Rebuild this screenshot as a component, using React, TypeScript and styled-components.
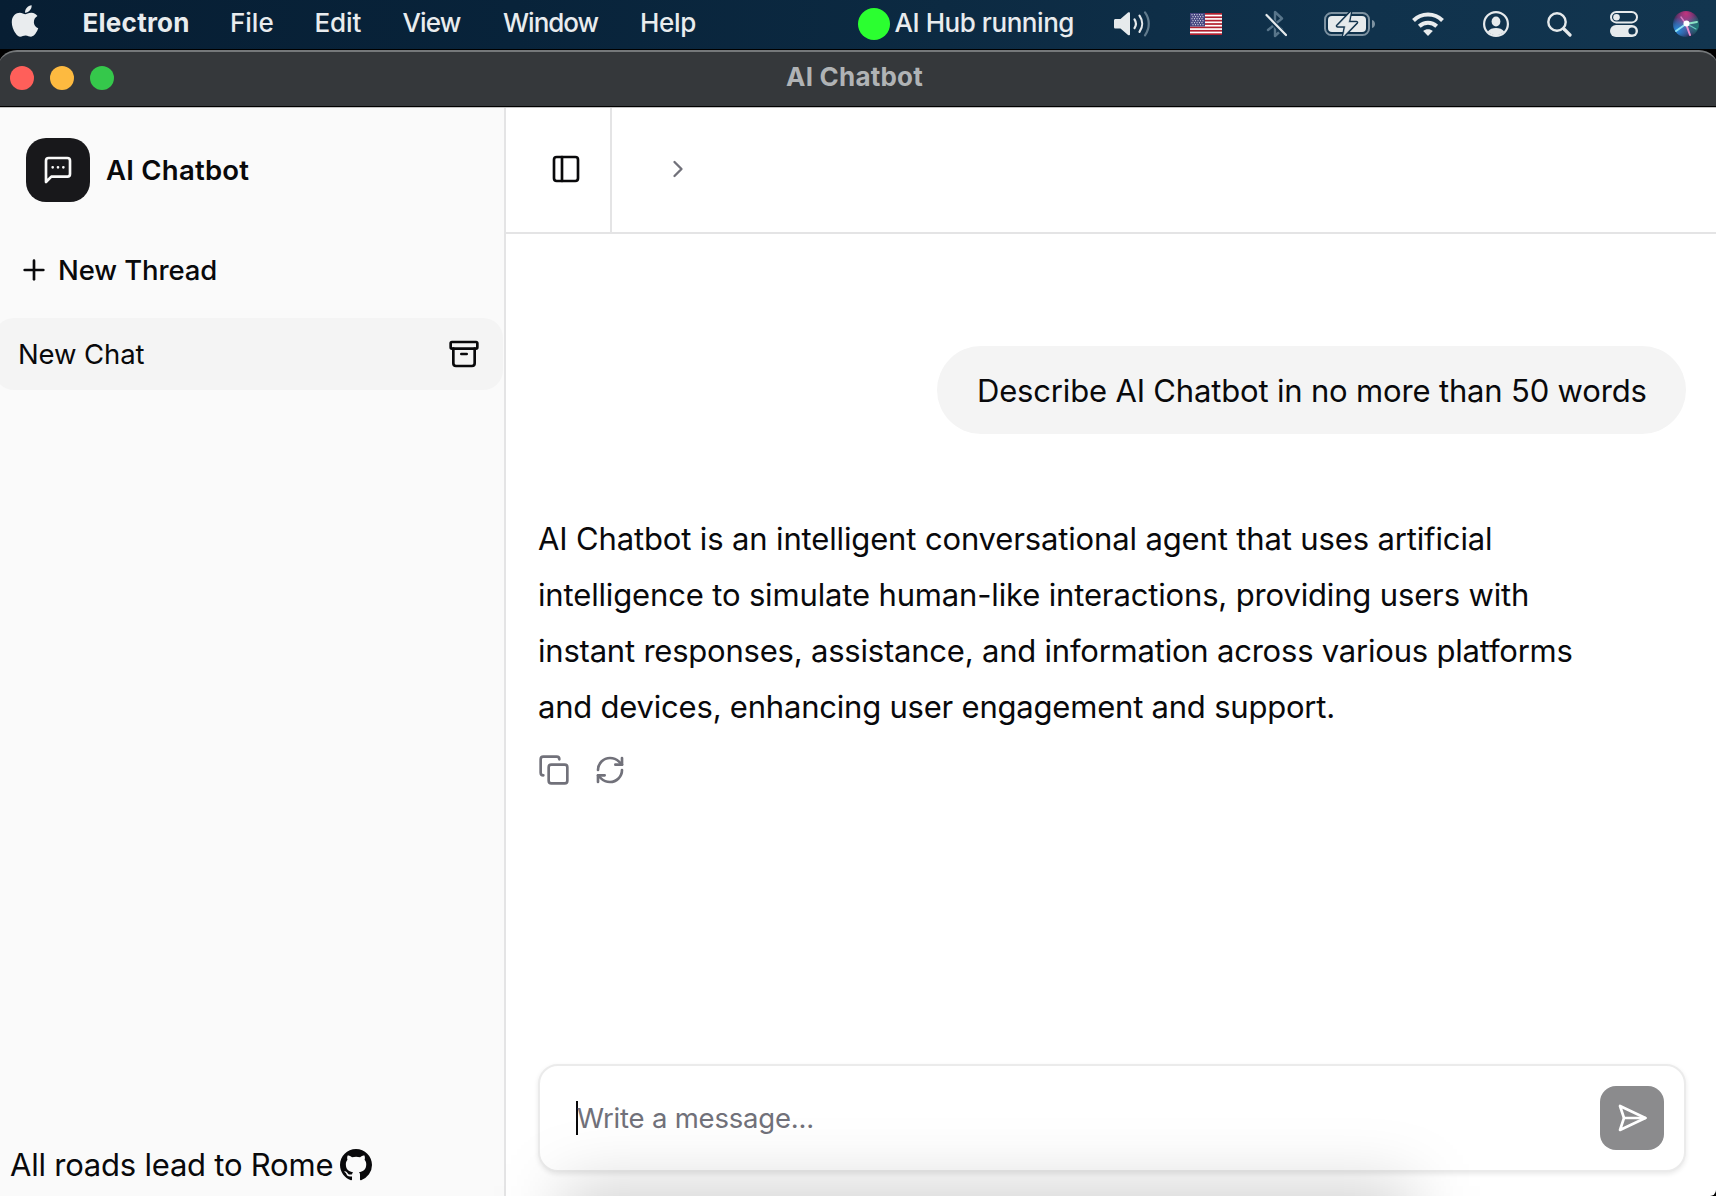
import React from "react";
import styled, { createGlobalStyle } from "styled-components";
import {
  Archive,
  ChevronRight,
  Copy,
  PanelLeft,
  Plus,
  RefreshCw,
} from "lucide-react";
import { FaApple } from "react-icons/fa";

const GlobalStyle = createGlobalStyle`
  *, *::before, *::after { box-sizing: border-box; }
  body {
    margin: 0;
    background: #000;
    font-family: Inter, "Liberation Sans", sans-serif;
    color: #09090b;
  }
  svg { display: block; flex: none; }
`;

const Screen = styled.div`
  position: relative;
  display: flex;
  flex-direction: column;
  width: 1716px;
  height: 1196px;
  overflow: hidden;
  background: #000;
`;

/* ---------- system menu bar ---------- */

const MenuBar = styled.header`
  display: flex;
  align-items: center;
  flex: none;
  height: 49px;
  margin-bottom: 1px;
  padding-bottom: 1px;
  background: linear-gradient(90deg, #071e33 0%, #08233a 30%, #0c2a42 55%, #10324c 80%, #12354f 100%);
  color: #e9ecee;
  font-size: 26px;
  font-weight: 500;
  line-height: 46px;
  white-space: nowrap;
`;

const AppleSlot = styled.div`
  display: flex;
  width: 82.5px;
  height: 48px;
  padding: 3px 0 0 7px;
`;

const MenuItem = styled.span<{ $width: number; $tracking?: number; $bold?: boolean }>`
  width: ${(p) => p.$width}px;
  padding-bottom: 2px;
  letter-spacing: ${(p) => p.$tracking ?? 0}px;
  font-weight: ${(p) => (p.$bold ? 700 : 500)};
`;

const HubStatus = styled.div`
  display: flex;
  align-items: center;
  gap: 5px;
  margin-left: auto;
  letter-spacing: -0.45px;
`;

const HubDot = styled.span`
  width: 32px;
  height: 32px;
  border-radius: 50%;
  background: #2bff30;
`;

const HubLabel = styled.span`
  padding-bottom: 3px;
`;

const StatusIcons = styled.div`
  display: flex;
  align-items: center;
  height: 48px;
  padding-right: 16px;
`;

const StatusIcon = styled.span<{ $gap: number }>`
  display: flex;
  margin-left: ${(p) => p.$gap}px;
`;

/* ---------- window ---------- */

const Window = styled.div`
  display: flex;
  flex-direction: column;
  flex: 1;
  min-height: 0;
  overflow: hidden;
  border-bottom-right-radius: 6px;
`;

const TitleBar = styled.div`
  display: flex;
  align-items: center;
  flex: none;
  height: 56px;
  margin: 0 -3px;
  padding: 0 13px 2px;
  border-top: 2px solid #75787a;
  border-radius: 20px 20px 0 0;
  background: #35383b;
`;

const Lights = styled.div`
  display: flex;
  flex: 1;
  gap: 16px;
  height: 24px;
`;

const Light = styled.span<{ $color: string }>`
  width: 24px;
  height: 24px;
  border-radius: 50%;
  background: ${(p) => p.$color};
`;

const WindowTitle = styled.div`
  padding-bottom: 3px;
  margin-right: 7px;
  color: #b0b3b5;
  font-size: 26px;
  font-weight: 700;
  line-height: 40px;
  letter-spacing: 0.2px;
`;

const TitleSpacer = styled.div`
  flex: 1;
`;

const Body = styled.div`
  display: flex;
  flex: 1;
  min-height: 0;
  margin-top: 1px;
  border-top: 1px solid #c2c2c2;
  background: #fff;
`;

/* ---------- sidebar ---------- */

const Sidebar = styled.aside`
  display: flex;
  flex-direction: column;
  flex: none;
  width: 506px;
  border-right: 2px solid #e4e4e5;
  background: #fafafa;
`;

const Brand = styled.div`
  display: flex;
  align-items: center;
  gap: 16px;
  padding: 30px 26px 0;
  font-size: 27.5px;
  font-weight: 600;
  letter-spacing: 0.25px;
  line-height: 40px;
`;

const BrandMark = styled.span`
  display: grid;
  place-items: center;
  width: 64px;
  height: 64px;
  border-radius: 20px;
  background: #18181b;
`;

const NewThread = styled.button`
  display: flex;
  align-items: center;
  gap: 8px;
  height: 64px;
  margin: 36px 0 0 18px;
  padding: 0;
  border: 0;
  background: none;
  color: inherit;
  font: 500 27.5px/40px Inter, "Liberation Sans", sans-serif;
  letter-spacing: -0.1px;
`;

const ThreadRow = styled.div`
  display: flex;
  align-items: center;
  justify-content: space-between;
  height: 72px;
  margin: 16px 1px 0 -6px;
  padding: 0 23px 0 24px;
  border-radius: 20px;
  background: #f4f4f4;
  font-size: 27.5px;
  line-height: 40px;
  letter-spacing: -0.1px;
`;

const Footer = styled.div`
  display: flex;
  align-items: center;
  gap: 7px;
  margin-top: auto;
  padding: 0 10px 11px;
  font-size: 31px;
  line-height: 40px;
  letter-spacing: -0.22px;
`;

/* ---------- conversation ---------- */

const Main = styled.main`
  display: flex;
  flex-direction: column;
  flex: 1;
  min-width: 0;
`;

const Header = styled.div`
  display: flex;
  flex: none;
  height: 126px;
  border-bottom: 2px solid #e4e4e5;
`;

const ToggleCell = styled.div`
  display: flex;
  align-items: center;
  width: 106px;
  padding: 0 0 2px 44px;
  border-right: 2px solid #e4e4e5;
`;

const Crumb = styled.div`
  display: flex;
  align-items: center;
  padding: 0 0 2px 52px;
  color: #71717a;
`;

const Conversation = styled.section`
  display: flex;
  flex-direction: column;
  flex: 1;
  padding: 112px 30px 0 32px;
`;

const UserBubble = styled.div`
  align-self: flex-end;
  width: 749px;
  height: 88px;
  padding-left: 40px;
  border-radius: 44px;
  background: #f4f4f4;
  font-size: 31px;
  line-height: 90px;
  letter-spacing: -0.17px;
  white-space: nowrap;
`;

const Answer = styled.p`
  display: flex;
  flex-direction: column;
  margin: 77px 0 0;
  font-size: 31px;
  line-height: 56px;
  white-space: nowrap;
`;

const AnswerLine = styled.span<{ $tracking: number }>`
  letter-spacing: ${(p) => p.$tracking}px;
`;

const Actions = styled.div`
  display: flex;
  gap: 24px;
  margin-top: 19px;
  color: #71717a;
`;

const Composer = styled.div`
  display: flex;
  align-items: center;
  justify-content: space-between;
  flex: none;
  height: 108px;
  margin: 0 30px 24px 32px;
  padding: 0 20px 0 36px;
  border: 2px solid #ebebeb;
  border-radius: 20px;
  background: #fff;
  box-shadow: 0 2px 5px rgba(0, 0, 0, 0.09);
`;

const Placeholder = styled.div`
  display: flex;
  align-items: center;
  height: 34px;
  border-left: 2px solid #09090b;
  color: #71717a;
  font-size: 27.5px;
  line-height: 34px;
  letter-spacing: -0.2px;
  text-indent: -1px;
`;

const SendButton = styled.button`
  display: grid;
  place-items: center;
  width: 64px;
  height: 64px;
  padding: 0;
  border: 0;
  border-radius: 16px;
  background: #8b8b8d;
`;

/* Soft shadow cast by the dock hidden under the lower edge of the screen */
const DockShadow = styled.div`
  position: absolute;
  left: 562px;
  top: 1186px;
  width: 850px;
  height: 200px;
  background: rgba(0, 0, 0, 0.18);
  filter: blur(33px);
  pointer-events: none;
`;

/* ---------- drawings ---------- */

const SpeakerIcon = () => (
  <svg width="37" height="28" viewBox="0 0 37 28" fill="none" strokeLinecap="round">
    <path d="M1.5 9h5L14 2.6c1-.7 2-.4 2 .8v20.8c0 1.2-1 1.5-2 .8L6.5 18.6h-5C.6 18.6 0 18 0 17v-6.4C0 9.6.6 9 1.5 9Z" fill="#e6eaec" />
    <path d="M20.5 9.4c1.7 2.6 1.7 6.2 0 8.8" stroke="#e6eaec" strokeWidth="2.2" />
    <path d="M25.5 5.7c3.5 4.9 3.5 11.3 0 16.2" stroke="#e6eaec" strokeWidth="2.2" />
    <path d="M31 2.3c5 7 5 16 0 23" stroke="#607a8c" strokeWidth="2.2" />
  </svg>
);

const FlagIcon = () => (
  <svg width="32" height="22" viewBox="0 0 32 22">
    <rect width="32" height="22" fill="#fff" />
    {[0, 1, 2, 3, 4, 5, 6].map((i) => (
      <rect key={i} y={i * 3.385} width="32" height="1.7" fill="#b1202f" />
    ))}
    <rect width="15" height="13.5" fill="#454680" />
    {[0, 1, 2, 3, 4, 5].map((r) =>
      [0, 1, 2, 3, 4].map((c) => (
        <circle key={`${r}-${c}`} cx={2 + c * 2.5 + (r % 2)} cy={1.7 + r * 2} r="0.6" fill="#e2e2ee" />
      ))
    )}
  </svg>
);

const BluetoothOffIcon = () => (
  <svg width="22" height="28" viewBox="0 0 22 28" fill="none" strokeLinecap="round" strokeLinejoin="round">
    <path d="M3 20 17 8.5 10 2v24l7-6.5L3 8" stroke="#58758a" strokeWidth="2.4" />
    <path d="M1.5 5.500 21 26" stroke="#12344e" strokeWidth="5" />
    <path d="M1.5 5 21 25" stroke="#e6eaec" strokeWidth="2.2" />
  </svg>
);

const BatteryIcon = () => (
  <svg width="52" height="26" viewBox="0 0 52 26">
    <rect x="1" y="2" width="44" height="22" rx="6.5" fill="none" stroke="#7d92a1" strokeWidth="2" />
    <path d="M48 9c4 1 4 7 0 8Z" fill="#7d92a1" />
    <rect x="4" y="5" width="38" height="16" rx="4" fill="#e6eaec" />
    <path d="M26.500 1.500 13.500 15h8L19.500 25 32.500 11.500h-8Z" fill="#e6eaec" stroke="#11334d" strokeWidth="3.4" strokeLinejoin="round" />
    <path d="M26.500 1.500 13.500 15h8L19.500 25 32.500 11.500h-8Z" fill="#e6eaec" stroke="#e6eaec" strokeWidth="0.6" strokeLinejoin="round" />
  </svg>
);

const WifiIcon = () => (
  <svg width="32" height="24" viewBox="0 0 32 24" fill="none" stroke="#e9ecee" strokeWidth="4">
    <path d="M1.5 8.5c8-8 21-8 29 0" />
    <path d="M7.3 14.3c5-4.7 12.4-4.7 17.4 0" />
    <path d="M11.2 19c2.7-2.5 6.9-2.5 9.6 0L16 24Z" fill="#e9ecee" stroke="none" />
  </svg>
);

const UserIcon = () => (
  <svg width="26" height="26" viewBox="0 0 26 26">
    <circle cx="13" cy="13" r="11.9" fill="none" stroke="#e6eaec" strokeWidth="2.2" />
    <ellipse cx="13" cy="10.5" rx="4.4" ry="5" fill="#e6eaec" />
    <path d="M4.8 20.5c3.5-4.6 12.9-4.6 16.4 0-4 5-12.4 5-16.4 0Z" fill="#e6eaec" />
  </svg>
);

const SearchIcon = () => (
  <svg width="25" height="25" viewBox="0 0 25 25" fill="none" stroke="#e6eaec" strokeLinecap="round">
    <circle cx="10" cy="10" r="8.7" strokeWidth="2.4" />
    <path d="m17 17 6 6" strokeWidth="3.2" />
  </svg>
);

const ControlCenterIcon = () => (
  <svg width="28" height="26" viewBox="0 0 28 26">
    <rect x="1" y="1" width="26" height="10.4" rx="5.2" fill="none" stroke="#e6eaec" strokeWidth="2" />
    <circle cx="6.5" cy="6.2" r="3.3" fill="#e6eaec" />
    <rect y="14" width="28" height="12" rx="6" fill="#e6eaec" />
    <circle cx="22" cy="20" r="3.6" fill="#12344e" />
  </svg>
);

const SiriIcon = () => (
  <svg width="28" height="28" viewBox="0 0 28 28">
    <defs>
      <radialGradient id="siriBase" cx="50%" cy="50%" r="50%">
        <stop offset="0" stopColor="#6d6bb0" />
        <stop offset="0.75" stopColor="#3a3f78" />
        <stop offset="1" stopColor="#252b4e" />
      </radialGradient>
      <radialGradient id="siriPink" cx="50%" cy="10%" r="55%">
        <stop offset="0" stopColor="#c2347f" />
        <stop offset="1" stopColor="#c2347f" stopOpacity="0" />
      </radialGradient>
      <radialGradient id="siriBlue" cx="15%" cy="75%" r="50%">
        <stop offset="0" stopColor="#2a8fe0" />
        <stop offset="1" stopColor="#2a8fe0" stopOpacity="0" />
      </radialGradient>
      <radialGradient id="siriTeal" cx="95%" cy="60%" r="45%">
        <stop offset="0" stopColor="#1f7f78" />
        <stop offset="1" stopColor="#1f7f78" stopOpacity="0" />
      </radialGradient>
    </defs>
    <circle cx="14" cy="14" r="13" fill="url(#siriBase)" />
    <circle cx="14" cy="14" r="13" fill="url(#siriPink)" />
    <circle cx="14" cy="14" r="13" fill="url(#siriBlue)" />
    <circle cx="14" cy="14" r="13" fill="url(#siriTeal)" />
    <g fill="none" strokeLinecap="round">
      <path d="M14 14 4 21" stroke="#8fe4f4" strokeWidth="2" />
      <path d="M14 14 25 12" stroke="#8be3c6" strokeWidth="1.8" />
      <path d="M14 14 18 25" stroke="#ee8fd0" strokeWidth="2" />
      <path d="M14 14 9 7" stroke="#d97cc4" strokeWidth="1.4" />
      <path d="M15 14 24 19" stroke="#66c7c0" strokeWidth="1.2" />
    </g>
    <circle cx="14.5" cy="13.5" r="3" fill="#fff" />
  </svg>
);

const ChatIcon = () => (
  <svg width="32" height="32" viewBox="0 0 24 24" fill="none" stroke="#fafafa" strokeWidth="2" strokeLinecap="round" strokeLinejoin="round">
    <path d="M21 15a2 2 0 0 1-2 2H7l-4 4V5a2 2 0 0 1 2-2h14a2 2 0 0 1 2 2z" />
    <path d="M8 10h.01M12 10h.01M16 10h.01" />
  </svg>
);

const SendIcon = () => (
  <svg width="32" height="32" viewBox="0 0 24 24" fill="none" stroke="#fff" strokeWidth="2" strokeLinecap="round" strokeLinejoin="round">
    <path d="m3 3 3 9-3 9 19-9Z" />
    <path d="M6 12h16" />
  </svg>
);

const GithubMark = () => (
  <svg width="32" height="32" viewBox="0 0 16 16" fill="#09090b">
    <path d="M8 0C3.58 0 0 3.58 0 8c0 3.54 2.29 6.53 5.47 7.59.4.07.55-.17.55-.38 0-.19-.01-.82-.01-1.49-2.01.37-2.53-.49-2.69-.94-.09-.23-.48-.94-.82-1.13-.28-.15-.68-.52-.01-.53.63-.01 1.08.58 1.23.82.72 1.21 1.87.87 2.33.66.07-.52.28-.87.51-1.07-1.78-.2-3.64-.89-3.64-3.95 0-.87.31-1.59.82-2.15-.08-.2-.36-1.02.08-2.12 0 0 .67-.21 2.2.82.64-.18 1.32-.27 2-.27.68 0 1.36.09 2 .27 1.53-1.04 2.2-.82 2.2-.82.44 1.1.16 1.92.08 2.12.51.56.82 1.27.82 2.15 0 3.07-1.87 3.75-3.65 3.95.29.25.54.73.54 1.48 0 1.07-.01 1.93-.01 2.2 0 .21.15.46.55.38A8.013 8.013 0 0 0 16 8c0-4.42-3.58-8-8-8z" />
  </svg>
);

export default function App() {
  return (
    <Screen>
      <GlobalStyle />
      <MenuBar>
        <AppleSlot>
          <FaApple size={36} color="#e9ecee" />
        </AppleSlot>
        <MenuItem $width={147.5} $tracking={0.25} $bold>Electron</MenuItem>
        <MenuItem $width={84.5}>File</MenuItem>
        <MenuItem $width={88} $tracking={-0.1}>Edit</MenuItem>
        <MenuItem $width={100.5} $tracking={-0.9}>View</MenuItem>
        <MenuItem $width={137} $tracking={-1}>Window</MenuItem>
        <MenuItem $width={60} $tracking={-0.3}>Help</MenuItem>
        <HubStatus>
          <HubDot />
          <HubLabel>AI Hub running</HubLabel>
        </HubStatus>
        <StatusIcons>
          <StatusIcon $gap={40}><SpeakerIcon /></StatusIcon>
          <StatusIcon $gap={39}><FlagIcon /></StatusIcon>
          <StatusIcon $gap={43}><BluetoothOffIcon /></StatusIcon>
          <StatusIcon $gap={37}><BatteryIcon /></StatusIcon>
          <StatusIcon $gap={36}><WifiIcon /></StatusIcon>
          <StatusIcon $gap={39}><UserIcon /></StatusIcon>
          <StatusIcon $gap={38}><SearchIcon /></StatusIcon>
          <StatusIcon $gap={38}><ControlCenterIcon /></StatusIcon>
          <StatusIcon $gap={34}><SiriIcon /></StatusIcon>
        </StatusIcons>
      </MenuBar>

      <Window>
        <TitleBar>
          <Lights>
            <Light $color="#ff5f5a" />
            <Light $color="#fdba40" />
            <Light $color="#35c84b" />
          </Lights>
          <WindowTitle>AI Chatbot</WindowTitle>
          <TitleSpacer />
        </TitleBar>

        <Body>
          <Sidebar>
            <Brand>
              <BrandMark><ChatIcon /></BrandMark>
              AI Chatbot
            </Brand>
            <NewThread>
              <Plus size={32} />
              New Thread
            </NewThread>
            <ThreadRow>
              New Chat
              <Archive size={32} />
            </ThreadRow>
            <Footer>
              All roads lead to Rome
              <GithubMark />
            </Footer>
          </Sidebar>

          <Main>
            <Header>
              <ToggleCell><PanelLeft size={32} /></ToggleCell>
              <Crumb><ChevronRight size={28} /></Crumb>
            </Header>
            <Conversation>
              <UserBubble>Describe AI Chatbot in no more than 50 words</UserBubble>
              <Answer>
                <AnswerLine $tracking={-0.14}>AI Chatbot is an intelligent conversational agent that uses artificial</AnswerLine>
                <AnswerLine $tracking={-0.15}>intelligence to simulate human-like interactions, providing users with</AnswerLine>
                <AnswerLine $tracking={-0.21}>instant responses, assistance, and information across various platforms</AnswerLine>
                <AnswerLine $tracking={-0.21}>and devices, enhancing user engagement and support.</AnswerLine>
              </Answer>
              <Actions>
                <Copy size={32} />
                <RefreshCw size={32} />
              </Actions>
            </Conversation>
            <Composer>
              <Placeholder>Write a message...</Placeholder>
              <SendButton><SendIcon /></SendButton>
            </Composer>
          </Main>
        </Body>
      </Window>
      <DockShadow />
    </Screen>
  );
}
